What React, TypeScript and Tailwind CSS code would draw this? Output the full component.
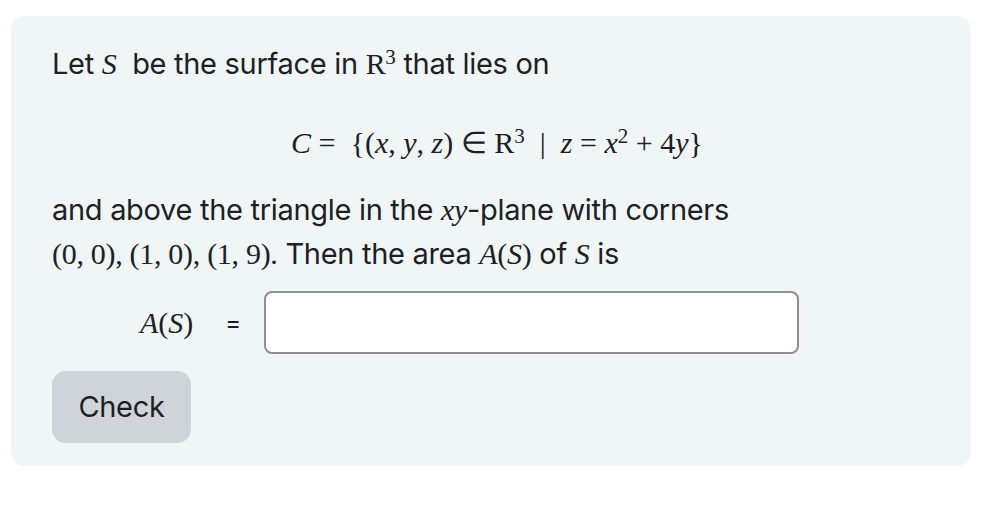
import React from "react";

const serif = { fontFamily: '"Liberation Serif", "Times New Roman", serif' };

function M({ children, i = true }: { children: React.ReactNode; i?: boolean }) {
  return (
    <span className={`text-[30px] ${i ? "italic" : ""}`} style={serif}>
      {children}
    </span>
  );
}

export default function App() {
  return (
    <div className="w-[985px] h-[506px] bg-white pt-[16px] pl-[11px]" style={{ fontFamily: 'Inter, "Noto Sans", sans-serif' }}>
      <div className="w-[960px] h-[450px] bg-[#f0f6f6] rounded-[14px] pl-[41px] pr-[41px] pt-[26px] text-[#1d2125] text-[29px]">
        <p className="leading-[44px] tracking-[-0.3px]">
          Let <M>S</M>&nbsp; be the surface in <M i={false}>R</M>
          <sup className="text-[21px]" style={serif}>3</sup> that lies on
        </p>
        <div className="mt-[13px] h-[87px] flex items-center justify-center pl-[12px] text-[30px]" style={serif}>
          <span>
            <i>C</i> = &nbsp;{"{"}(<i>x</i>, <i>y</i>, <i>z</i>) ∈ R
            <sup className="text-[21px]">3</sup> &nbsp;|&nbsp; <i>z</i> = <i>x</i>
            <sup className="text-[21px]">2</sup> + 4<i>y</i>
            {"}"}
          </span>
        </div>
        <p className="leading-[44px] mt-[2px] tracking-[-0.3px]">
          and above the triangle in the <M>xy</M>-plane with corners
          <br />
          <M i={false}>(0, 0), (1, 0), (1, 9).</M> Then the area <M>A</M>
          <M i={false}>(</M>
          <M>S</M>
          <M i={false}>)</M> of <M>S</M> is
        </p>
        <div className="flex items-center mt-[15px]">
          <span className="ml-[88px] text-[30px]" style={serif}>
            <i>A</i>(<i>S</i>)
          </span>
          <span className="ml-[32px] text-[24px]">=</span>
          <input
            className="ml-[23px] w-[535px] h-[63px] bg-white border-2 border-[#8f8f8f] rounded-[8px] outline-none"
            type="text"
          />
        </div>
        <button className="mt-[17px] w-[139px] h-[72px] bg-[#ced4da] rounded-[14px] text-[29px] text-[#1d2125] tracking-[-0.3px]">
          Check
        </button>
      </div>
    </div>
  );
}
